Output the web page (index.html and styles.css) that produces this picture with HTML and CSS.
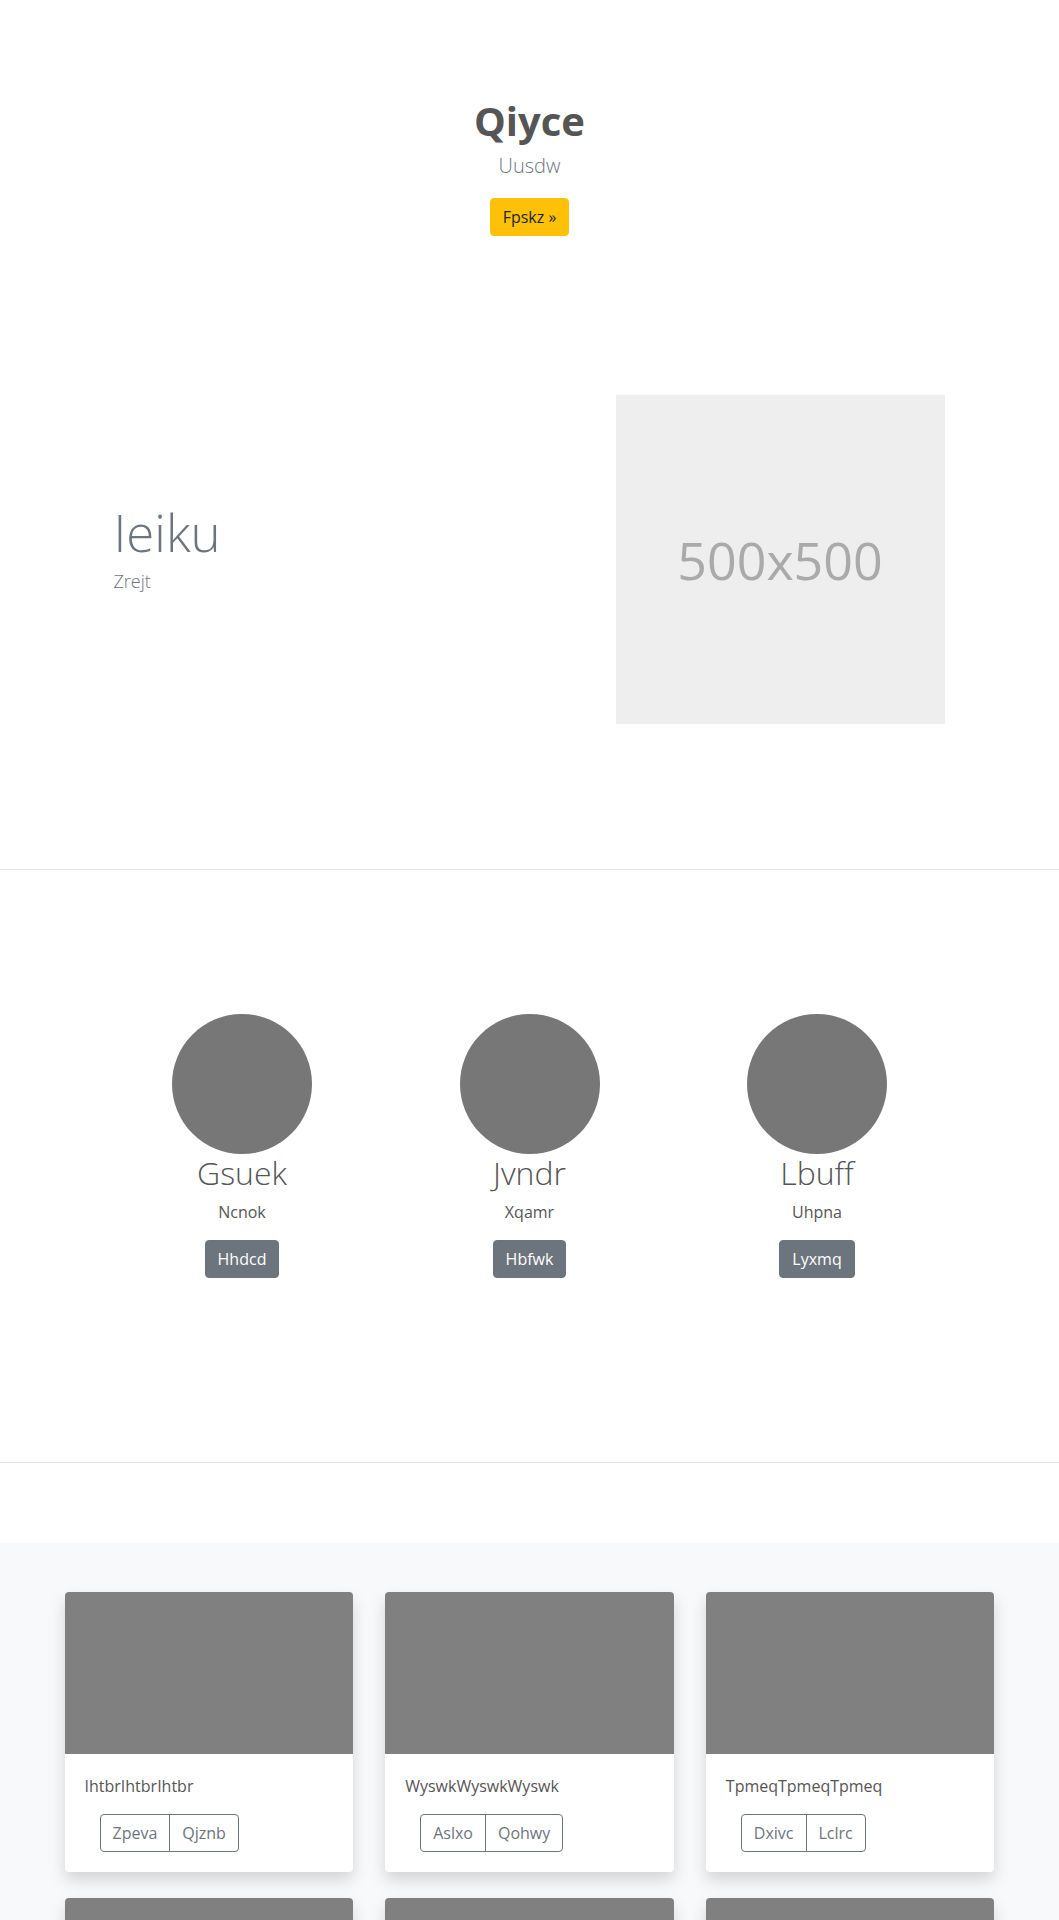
FILE: index.html
```html
<!DOCTYPE html>
<html lang="en">
<head>
<meta charset="utf-8">
<title>Qiyce</title>
<link rel="stylesheet" href="styles.css">
</head>
<body>
<header class="hero">
  <h1 class="hero-title">Qiyce</h1>
  <p class="lead hero-lead">Uusdw</p>
  <a class="btn btn-warning" href="#">Fpskz &raquo;</a>
</header>

<section class="feature">
  <div class="container feature-row">
    <div class="feature-text">
      <h2 class="display">Ieiku</h2>
      <p class="lead feature-lead">Zrejt</p>
    </div>
    <div class="feature-media">
      <div class="placeholder">500x500</div>
    </div>
  </div>
</section>

<hr class="divider">

<section class="team">
  <div class="team-grid">
    <div class="member">
      <div class="avatar"></div>
      <h3 class="member-name">Gsuek</h3>
      <p class="member-role">Ncnok</p>
      <a class="btn btn-secondary" href="#">Hhdcd</a>
    </div>
    <div class="member">
      <div class="avatar"></div>
      <h3 class="member-name">Jvndr</h3>
      <p class="member-role">Xqamr</p>
      <a class="btn btn-secondary" href="#">Hbfwk</a>
    </div>
    <div class="member">
      <div class="avatar"></div>
      <h3 class="member-name">Lbuff</h3>
      <p class="member-role">Uhpna</p>
      <a class="btn btn-secondary" href="#">Lyxmq</a>
    </div>
  </div>
</section>

<hr class="divider">

<section class="album">
  <div class="container card-grid">
    <div class="card">
      <div class="card-img"></div>
      <div class="card-body">
        <p class="card-text">IhtbrIhtbrIhtbr</p>
        <div class="btn-group">
          <a class="btn btn-outline" href="#">Zpeva</a><a class="btn btn-outline" href="#">Qjznb</a>
        </div>
      </div>
    </div>
    <div class="card">
      <div class="card-img"></div>
      <div class="card-body">
        <p class="card-text">WyswkWyswkWyswk</p>
        <div class="btn-group">
          <a class="btn btn-outline" href="#">Aslxo</a><a class="btn btn-outline" href="#">Qohwy</a>
        </div>
      </div>
    </div>
    <div class="card">
      <div class="card-img"></div>
      <div class="card-body">
        <p class="card-text">TpmeqTpmeqTpmeq</p>
        <div class="btn-group">
          <a class="btn btn-outline" href="#">Dxivc</a><a class="btn btn-outline" href="#">Lclrc</a>
        </div>
      </div>
    </div>
    <div class="card">
      <div class="card-img"></div>
      <div class="card-body">
        <p class="card-text">RboqlRboqlRboql</p>
        <div class="btn-group">
          <a class="btn btn-outline" href="#">Vtoyn</a><a class="btn btn-outline" href="#">Mkwhe</a>
        </div>
      </div>
    </div>
    <div class="card">
      <div class="card-img"></div>
      <div class="card-body">
        <p class="card-text">FanciFanciFanci</p>
        <div class="btn-group">
          <a class="btn btn-outline" href="#">Obrug</a><a class="btn btn-outline" href="#">Szepl</a>
        </div>
      </div>
    </div>
    <div class="card">
      <div class="card-img"></div>
      <div class="card-body">
        <p class="card-text">GumtaGumtaGumta</p>
        <div class="btn-group">
          <a class="btn btn-outline" href="#">Wetur</a><a class="btn btn-outline" href="#">Hiqad</a>
        </div>
      </div>
    </div>
  </div>
</section>
</body>
</html>
```

FILE: styles.css
```css
* { box-sizing: border-box; }

html, body {
  margin: 0;
  padding: 0;
  background: #fff;
}

body {
  font-family: "Open Sans", "Noto Sans", "Liberation Sans", sans-serif;
  font-size: 16px;
  line-height: 1.5;
  color: #555;
}

h1, h2, h3, p { margin: 0; }

.container {
  width: 960px;
  margin: 0 auto;
  padding: 0 15px;
}

/* buttons */
.btn {
  display: inline-block;
  font-size: 16px;
  line-height: 24px;
  padding: 6px 12px;
  border: 1px solid transparent;
  border-radius: 4px;
  text-decoration: none;
  text-align: center;
}

.btn-warning {
  background: #ffc107;
  border-color: #ffc107;
  color: #212529;
}

.btn-secondary {
  background: #6c757d;
  border-color: #6c757d;
  color: #fff;
}

.btn-outline {
  background: transparent;
  border-color: #6c757d;
  color: #6c757d;
}

.lead {
  font-size: 20px;
  font-weight: 300;
  color: #6c757d;
}

/* hero */
.hero {
  text-align: center;
  padding: 97px 0 79px;
}

.hero-title {
  font-size: 40px;
  line-height: 1.2;
  font-weight: 700;
  color: #555;
  margin-bottom: 6px;
}

.hero-lead {
  margin-bottom: 17px;
}

/* feature */
.feature {
  padding: 80px 0 145px;
}

.feature-row {
  display: grid;
  grid-template-columns: 1fr 1fr;
  align-items: center;
}

.feature-text {
  padding-left: 49px;
  padding-bottom: 22px;
}

.display {
  font-size: 51px;
  line-height: 1.2;
  font-weight: 300;
  color: #6c757d;
  margin-bottom: 4px;
}

.feature-lead {
  font-size: 18px;
}

.feature-media {
  padding-left: 86px;
}

.placeholder {
  width: 329px;
  height: 329px;
  background: #eee;
  color: #aaa;
  font-size: 52px;
  display: flex;
  align-items: center;
  justify-content: center;
}

.divider {
  margin: 0;
  border: 0;
  border-top: 1px solid rgba(0, 0, 0, 0.1);
}

/* team */
.team {
  padding: 144px 0 184px;
}

.team-grid {
  display: grid;
  grid-template-columns: repeat(3, 287.5px);
  justify-content: center;
}

.member {
  display: flex;
  flex-direction: column;
  align-items: center;
  text-align: center;
}

.avatar {
  width: 140px;
  height: 140px;
  border-radius: 50%;
  background: #777;
}

.member-name {
  font-size: 32px;
  line-height: 1.2;
  font-weight: 300;
  color: #555;
}

.member-role {
  margin-top: 8px;
  margin-bottom: 16px;
}

/* album */
.album {
  margin-top: 80px;
  background: #f8f9fa;
  padding: 49px 0 48px;
}

.card-grid {
  display: grid;
  grid-template-columns: repeat(3, 1fr);
  column-gap: 32px;
  row-gap: 26px;
}

.card {
  background: #fff;
  border-radius: 4px;
  overflow: hidden;
  box-shadow: 0 8px 16px rgba(0, 0, 0, 0.15);
}

.card-img {
  height: 162px;
  background: #808080;
}

.card-body {
  padding: 20px;
}

.card-text {
  margin-bottom: 16px;
}

.btn-group {
  display: inline-flex;
  margin-left: 15px;
}

.btn-group .btn + .btn {
  margin-left: -1px;
  border-top-left-radius: 0;
  border-bottom-left-radius: 0;
}

.btn-group .btn:first-child {
  border-top-right-radius: 0;
  border-bottom-right-radius: 0;
}
```
